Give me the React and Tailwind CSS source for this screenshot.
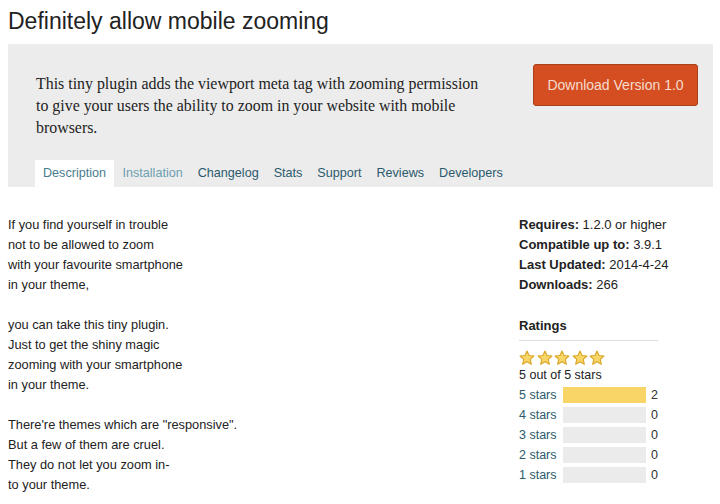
import React from "react";

const tabs = [
  { label: "Description", color: "text-[#4a7c8e]", active: true },
  { label: "Installation", color: "text-[#6c9fb2]" },
  { label: "Changelog", color: "text-[#2b5a6c]" },
  { label: "Stats", color: "text-[#2b5a6c]" },
  { label: "Support", color: "text-[#2b5a6c]" },
  { label: "Reviews", color: "text-[#2b5a6c]" },
  { label: "Developers", color: "text-[#2b5a6c]" },
];

const paragraphs = [
  ["If you find yourself in trouble", "not to be allowed to zoom", "with your favourite smartphone", "in your theme,"],
  ["you can take this tiny plugin.", "Just to get the shiny magic", "zooming with your smartphone", "in your theme."],
  ["There're themes which are \"responsive\".", "But a few of them are cruel.", "They do not let you zoom in-", "to your theme."],
];

const meta = [
  ["Requires:", "1.2.0 or higher"],
  ["Compatible up to:", "3.9.1"],
  ["Last Updated:", "2014-4-24"],
  ["Downloads:", "266"],
];

const ratings = [
  { label: "5 stars", count: 2, pct: 100 },
  { label: "4 stars", count: 0, pct: 0 },
  { label: "3 stars", count: 0, pct: 0 },
  { label: "2 stars", count: 0, pct: 0 },
  { label: "1 stars", count: 0, pct: 0 },
];

function Star() {
  return (
    <svg width="16" height="16" viewBox="0 0 24 24">
      <path
        d="M12 1.5l3.1 6.7 7.3.8-5.5 5 1.6 7.3L12 17.6l-6.5 3.7 1.6-7.3-5.5-5 7.3-.8z"
        fill="#f7d566"
        stroke="#d9a423"
        strokeWidth="1.6"
        strokeLinejoin="round"
      />
    </svg>
  );
}

export default function App() {
  return (
    <div className="w-[720px] h-[504px] bg-white overflow-hidden font-['Liberation_Sans',Arial,sans-serif] text-[#222]">
      <h1 className="pl-2 pt-[7px] h-[44px] text-[23px] leading-[28px] text-[#222]">
        Definitely allow mobile zooming
      </h1>

      {/* banner */}
      <div className="mx-2 w-[705px] h-[143px] bg-[#ececec] flex flex-col">
        <div className="flex flex-1">
          <p className="pl-7 pt-[29px] w-[480px] font-['Liberation_Serif','Times_New_Roman',serif] text-[15.9px] leading-[22px] text-[#222]">
            This tiny plugin adds the viewport meta tag with zooming permission to give your users the ability to zoom in your website with mobile browsers.
          </p>
          <div className="ml-auto pt-5 pr-[15px]">
            <button className="w-[165px] h-[42px] bg-[#d54e21] border border-[#a8401a] rounded-[3px] text-[#f6dccf] text-[14px]">
              Download Version 1.0
            </button>
          </div>
        </div>
        <div className="flex items-end pl-[27px] h-[27px] text-[12.6px]">
          {tabs.map((t) =>
            t.active ? (
              <div key={t.label} className={`h-[27px] px-2 mr-px bg-white flex items-center ${t.color}`}>
                {t.label}
              </div>
            ) : (
              <div key={t.label} className={`h-[27px] px-[7.5px] flex items-center ${t.color}`}>
                {t.label}
              </div>
            )
          )}
        </div>
      </div>

      {/* content */}
      <div className="flex pt-[28px]">
        <div className="pl-2 w-[519px] text-[12.8px] leading-[20px] text-[#222] flex flex-col gap-5">
          {paragraphs.map((p, i) => (
            <div key={i}>
              {p.map((l) => (
                <div key={l}>{l}</div>
              ))}
            </div>
          ))}
        </div>

        <div className="w-[160px] text-[13px] leading-[20px]">
          {meta.map(([k, v]) => (
            <div key={k}>
              <span className="font-bold">{k}</span> {v}
            </div>
          ))}

          <div className="w-[139px]">
            <div className="mt-[23px] font-bold leading-[16px]">Ratings</div>
            <div className="mt-[6px] h-px bg-[#dddddd]" />
            <div className="mt-[9px] flex gap-[1.5px]">
              {[0, 1, 2, 3, 4].map((i) => (
                <Star key={i} />
              ))}
            </div>
            <div className="leading-[18px] text-[12.5px]">5 out of 5 stars</div>
            <div className="mt-[1px]">
              {ratings.map((r) => (
                <div key={r.label} className="flex items-center h-[20px] text-[12.5px]">
                  <span className="w-[44px] text-[#2b5a6c]">{r.label}</span>
                  <div className="w-[84px] h-[16px] bg-[#ebebeb]">
                    <div className="h-full bg-[#f8d566]" style={{ width: `${r.pct}%` }} />
                  </div>
                  <span className="ml-[5px] text-[#333]">{r.count}</span>
                </div>
              ))}
            </div>
          </div>
        </div>
      </div>
    </div>
  );
}
